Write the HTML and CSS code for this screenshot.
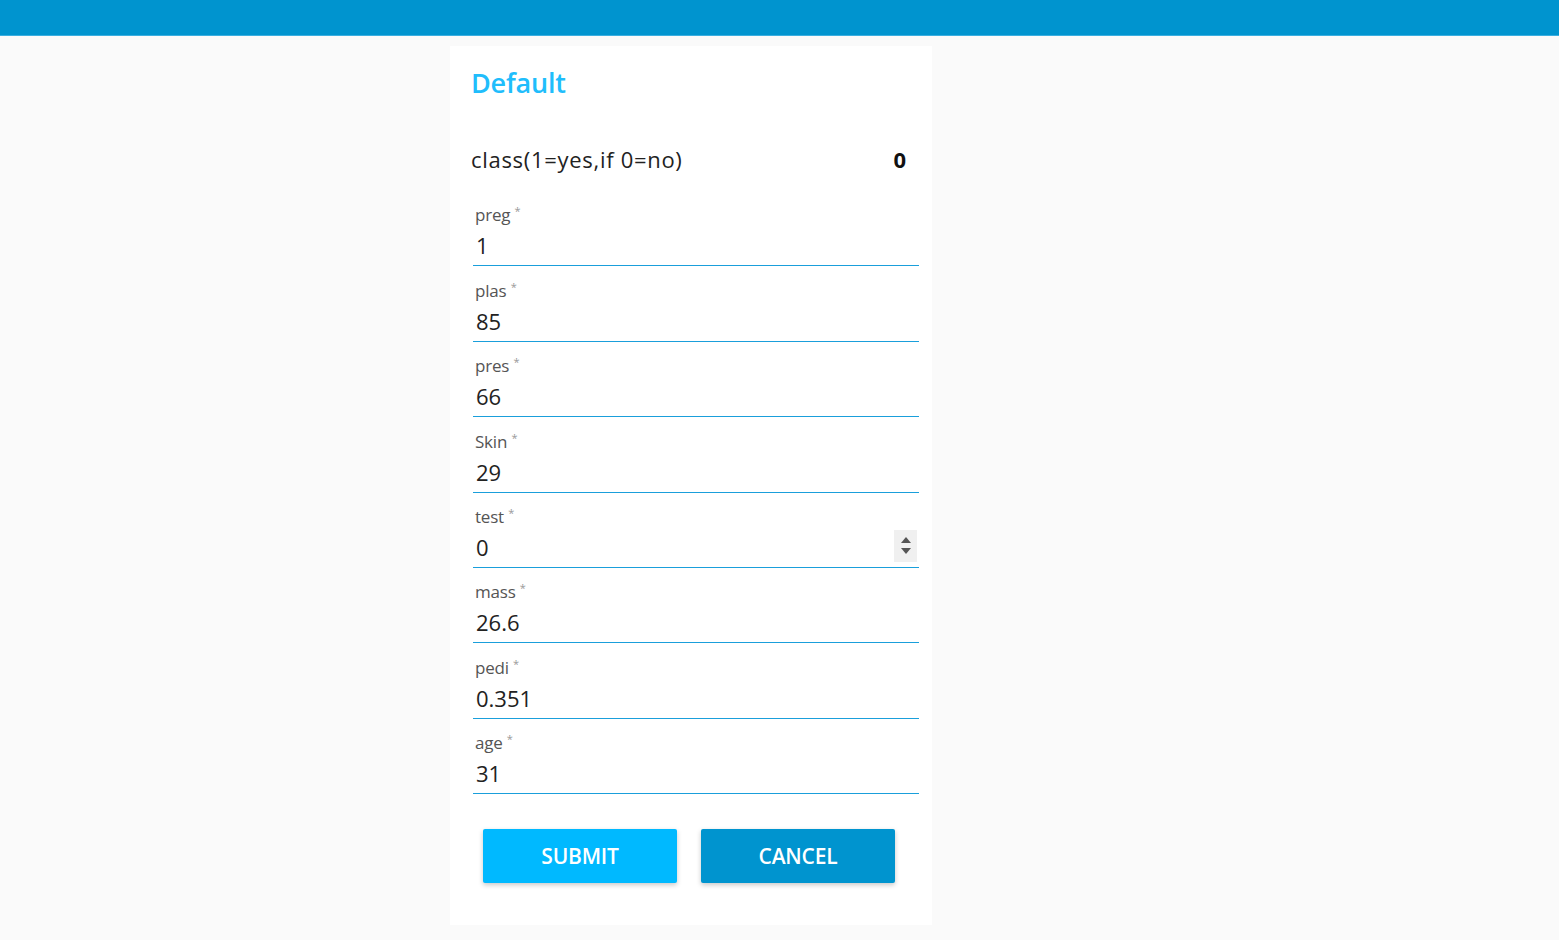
FILE: index.html
```html
<!DOCTYPE html>
<html lang="en">
<head>
<meta charset="utf-8">
<title>Default</title>
<link rel="stylesheet" href="styles.css">
</head>
<body>
<header class="topbar"></header>
<main class="page">
  <section class="card">
    <h1 class="title">Default</h1>
    <div class="result">
      <span class="result-label">class(1=yes,if 0=no)</span>
      <span class="result-value">0</span>
    </div>
    <form class="form">
      <label class="field">
        <span class="label">preg <span class="req">*</span></span>
        <span class="value">1</span>
      </label>
      <label class="field">
        <span class="label">plas <span class="req">*</span></span>
        <span class="value">85</span>
      </label>
      <label class="field">
        <span class="label">pres <span class="req">*</span></span>
        <span class="value">66</span>
      </label>
      <label class="field">
        <span class="label">Skin <span class="req">*</span></span>
        <span class="value">29</span>
      </label>
      <label class="field">
        <span class="label">test <span class="req">*</span></span>
        <span class="value">0
          <span class="spinner">
            <svg width="10" height="6" viewBox="0 0 10 6"><path d="M0 6 L5 0 L10 6 Z" fill="#555"/></svg>
            <svg width="10" height="6" viewBox="0 0 10 6"><path d="M0 0 L10 0 L5 6 Z" fill="#555"/></svg>
          </span>
        </span>
      </label>
      <label class="field">
        <span class="label">mass <span class="req">*</span></span>
        <span class="value">26.6</span>
      </label>
      <label class="field">
        <span class="label">pedi <span class="req">*</span></span>
        <span class="value">0.351</span>
      </label>
      <label class="field">
        <span class="label">age <span class="req">*</span></span>
        <span class="value">31</span>
      </label>
      <div class="actions">
        <button type="button" class="btn btn-submit">SUBMIT</button>
        <button type="button" class="btn btn-cancel">CANCEL</button>
      </div>
    </form>
  </section>
</main>
</body>
</html>
```

FILE: styles.css
```css
* { box-sizing: border-box; }
html, body {
  margin: 0;
  padding: 0;
  background: #fafafa;
  font-family: "Open Sans", "Noto Sans", "Liberation Sans", sans-serif;
  color: #222;
}
.topbar {
  height: 36px;
  background: #0094cf;
  border-bottom: 1px solid #3aaee0;
}
.page {
  padding: 10px 0 0 450px;
}
.card {
  width: 482px;
  background: #fff;
  padding: 19px 13px 42px 21px;
}
.title {
  margin: 0;
  font-size: 27px;
  line-height: 36px;
  font-weight: 600;
  color: #20bdfc;
  letter-spacing: -0.2px;
}
.result {
  display: flex;
  justify-content: space-between;
  align-items: center;
  margin-top: 43px;
  height: 30px;
  padding-right: 13px;
}
.result-label {
  font-size: 22px;
  color: #222;
  letter-spacing: 0.7px;
}
.result-value {
  font-size: 22px;
  font-weight: 700;
  color: #111;
}
.form {
  margin-top: 17px;
  padding-left: 2px;
}
.field {
  display: flex;
  flex-direction: column;
  padding-top: 14.4px;
  border-bottom: 1px solid #1a9fdb;
}
.label {
  display: block;
  height: 20px;
  padding-left: 2px;
  font-size: 17px;
  line-height: 20px;
  color: #555;
  letter-spacing: -0.2px;
}
.req {
  font-size: 11px;
  line-height: 0;
  color: #999;
  vertical-align: 6px;
}
.value {
  display: flex;
  align-items: center;
  justify-content: space-between;
  height: 38px;
  margin-top: 2px;
  padding-left: 3px;
  padding-bottom: 2px;
  font-size: 22px;
  line-height: 36px;
  color: #222;
}
.spinner {
  display: flex;
  flex-direction: column;
  align-items: center;
  justify-content: center;
  gap: 5px;
  width: 23px;
  height: 32px;
  margin-right: 2px;
  margin-bottom: 2px;
  background: #f0f0f0;
}
.spinner svg { display: block; }
.actions {
  display: flex;
  gap: 24px;
  margin-top: 35px;
  padding-left: 10px;
}
.btn {
  width: 194px;
  height: 54px;
  border: none;
  border-radius: 2px;
  font-family: "Open Sans", "Noto Sans", sans-serif;
  font-size: 21px;
  font-weight: 600;
  color: #fff;
  letter-spacing: -0.2px;
  box-shadow: 0 2px 5px rgba(0,0,0,0.22);
}
.btn-submit { background: #00b9ff; }
.btn-cancel { background: #0094cf; }
```
